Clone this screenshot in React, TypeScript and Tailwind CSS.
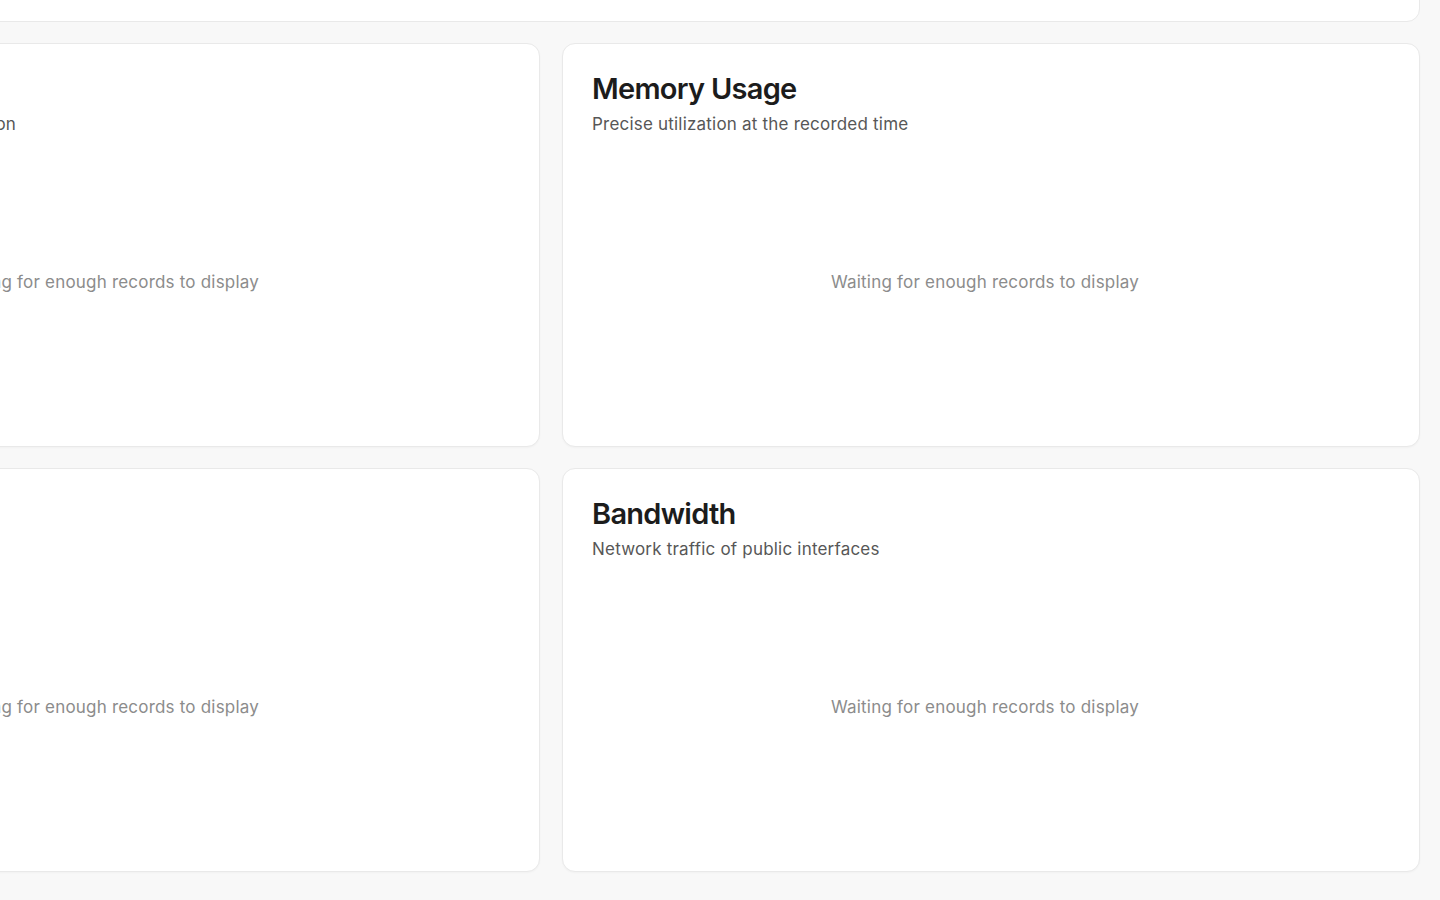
import React from "react";

type Card = { title: string; subtitle: string };

const rows: Card[][] = [
  [
    { title: "CPU Usage", subtitle: "Average system-wide CPU utilization" },
    { title: "Memory Usage", subtitle: "Precise utilization at the recorded time" },
  ],
  [
    { title: "Disk I/O", subtitle: "Throughput of root filesystem" },
    { title: "Bandwidth", subtitle: "Network traffic of public interfaces" },
  ],
];

function ChartCard({ title, subtitle }: Card) {
  return (
    <div className="flex h-[404px] flex-col rounded-[13px] border border-[#e9e9e9] bg-white px-[29px] pt-[27px] shadow-[0_1px_2px_rgba(0,0,0,0.03)]">
      <h2 className="text-[29px] font-semibold leading-[36px] tracking-[-0.025em] text-[#1c1c1c]">{title}</h2>
      <p className="mt-[5px] text-[17px] leading-[24px] tracking-[0.012em] text-[#575757]">{subtitle}</p>
      <div className="flex flex-1 items-center justify-center pb-[17px] pr-[12px]">
        <span className="text-[17px] tracking-[0.012em] text-[#8c8c8c]">Waiting for enough records to display</span>
      </div>
    </div>
  );
}

export default function App() {
  return (
    <div
      className="h-[900px] w-[1440px] overflow-hidden bg-[#f8f8f8]"
      style={{ fontFamily: "Inter, 'Noto Sans', sans-serif" }}
    >
      <div className="ml-[-318px] mr-[20px] mt-[-40px] flex flex-col gap-[21px]">
        <div className="h-[62px] rounded-[13px] border border-[#e9e9e9] bg-white" />
        {rows.map((row, i) => (
          <div key={i} className="grid grid-cols-2 gap-[22px]">
            {row.map((c) => (
              <ChartCard key={c.title} {...c} />
            ))}
          </div>
        ))}
      </div>
    </div>
  );
}
